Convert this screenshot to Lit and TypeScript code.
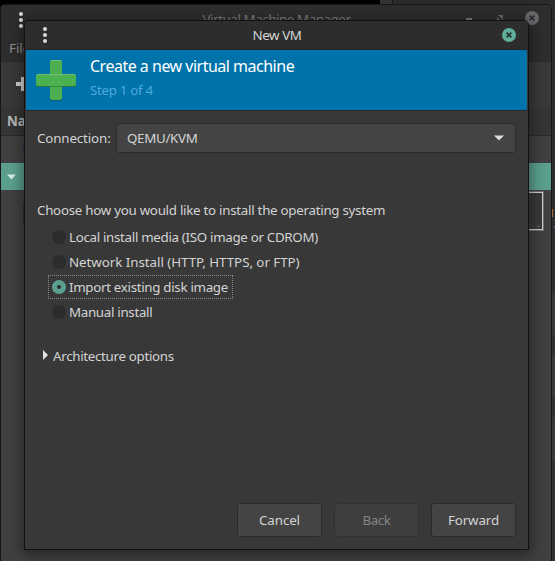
import { LitElement, html, css, svg } from "lit";
import { customElement, property, state } from "lit/decorators.js";
import { classMap } from "lit/directives/class-map.js";

const font = css`
  :host { font: 13.33px/18px "Noto Sans", sans-serif; color: #d3d3d3; box-sizing: border-box; }
  * { box-sizing: border-box; }
`;

const dots = html`<svg width="6" height="18" viewBox="0 0 6 18" fill="#dcd8d8">
  <circle cx="3" cy="3" r="2"/><circle cx="3" cy="9" r="2"/><circle cx="3" cy="15" r="2"/></svg>`;

const closeIcon = (fill: string, stroke: string) => html`<svg width="14" height="14" viewBox="0 0 14 14">
  ${svg`<circle cx="7" cy="7" r="7" fill=${fill}/><path d="M4.6 4.6L9.4 9.4M9.4 4.6L4.6 9.4" stroke=${stroke} stroke-width="1.7"/>`}</svg>`;

@customElement("manager-window")
class ManagerWindow extends LitElement {
  static styles = [font, css`
    :host { display: flex; flex-direction: column; height: 557px; width: 552px; border: 1px solid #161616; border-bottom: 0;
      border-radius: 5px 5px 0 0; background: #404040; overflow: hidden; }
    svg { display: block; flex: none; }
    .title { height: 29px; flex: none; background: #2d2d2d; display: flex; padding: 6px 12px 0 17px; color: #7b7b7b; }
    .title .name { flex: 1; text-align: center; line-height: 17px; padding-left: 64px; letter-spacing: -.42px; white-space: nowrap; }
    .controls { display: flex; gap: 18px; }
    .menu { height: 28px; flex: none; background: #2d2d2d; padding: 5px 8px; color: #8e8e8e; }
    .tools { height: 45px; flex: none; background: #393939; padding: 15px; }
    .head { height: 29px; flex: none; background: #353535; border-bottom: 1px solid #292929; font-weight: bold; padding: 5px 6px; color: #b8b8b8; }
    .conn { height: 27px; flex: none; padding: 9px 0 0 22px; }
    .edge { width: 1px; height: 8px; background: #2d3245; }
    .selected { height: 27px; flex: none; background: #5a9f8c; padding: 11px 6px; }
    .guest { height: 40px; flex: none; padding: 1px 8px 0 22px; display: flex; align-items: center; justify-content: space-between; }
    .screen { width: 1px; height: 18px; background: #2b2b2b; margin-top: 8px; }
    .graph { width: 20px; height: 38px; border: 1px solid #cfcbcb; outline: 1px solid rgba(200,196,196,.35); background: #393939; display: flex; align-items: flex-end; justify-content: flex-end; padding: 2px; }
    .trace { width: 3px; height: 1px; background: #557367; }
  `];
  render() {
    return html`
      <div class="title">${dots}<div class="name">Virtual Machine Manager</div>
        <div class="controls">
          <svg width="10" height="14" viewBox="0 0 10 14"><path d="M1 8H7" stroke="#777" stroke-width="2"/></svg>
          <svg width="14" height="14" viewBox="0 0 14 14" fill="#666"><path d="M5 4H10V9Z M4 6V10H8Z"/></svg>
          ${closeIcon("#67686b", "#2d2d2d")}
        </div></div>
      <div class="menu">File</div>
      <div class="tools"><svg width="14" height="14" viewBox="0 0 14 14"><path d="M7 0V14M0 7H14" stroke="#cfcfcf" stroke-width="4"/></svg></div>
      <div class="head">Name</div>
      <div class="conn"><div class="edge"></div></div>
      <div class="selected"><svg width="9" height="6" viewBox="0 0 9 6"><path d="M0 .5H9L4.5 5.5Z" fill="#dcebe6"/></svg></div>
      <div class="guest"><div class="screen"></div><div class="graph"><div class="trace"></div></div></div>`;
  }
}

@customElement("new-vm-dialog")
class NewVmDialog extends LitElement {
  @property() connection = "QEMU/KVM";
  @state() private chosen = 2;
  private choices: [string, string][] = [
    ["Local install media (ISO image or CDROM)", "tight"],
    ["Network Install (HTTP, HTTPS, or FTP)", "wide"],
    ["Import existing disk image", "tight"],
    ["Manual install", "tight"],
  ];
  static styles = [font, css`
    :host { display: flex; flex-direction: column; width: 505px; height: 530px; border: 1px solid #121212; border-radius: 5px 5px 0 0;
      background: #383838; box-shadow: 0 3px 14px 2px rgba(0,0,0,.42); overflow: hidden; }
    svg { display: block; flex: none; }
    .title { height: 29px; flex: none; background: #2d2d2d; border-bottom: 1px solid #252525; display: flex; padding: 5px 12px 0 17px; }
    .title .name { flex: 1; text-align: center; line-height: 18px; padding-left: 4px; letter-spacing: -.4px; }
    .close { padding-top: 2px; }
    .banner { height: 61px; flex: none; margin: 0 1px; background: #0073aa; border-bottom: 1px solid #292929; display: flex; gap: 14px; padding: 10px 10px 0; }
    .heading { font-size: 16px; line-height: 22px; color: #fff; margin-top: -5px; letter-spacing: -.5px; }
    .step { color: #4fa9dc; line-height: 18px; margin-top: 4px; letter-spacing: -.3px; }
    .connection { display: flex; align-items: center; margin: 12px 12px 0; height: 30px; }
    .caption { width: 79px; letter-spacing: -.13px; }
    .select { flex: 1; height: 30px; border: 1px solid #2b2b2b; border-radius: 3px; background: #444; display: flex; align-items: center; justify-content: space-between; padding: 0 11px 0 10px; letter-spacing: -.3px; }
    .prompt { margin: 48px 12px 0; height: 18px; letter-spacing: -.27px; }
    .choices { display: flex; flex-direction: column; align-items: flex-start; gap: 1px; margin: 6px 0 0 23px; }
    .choice { display: flex; align-items: center; gap: 3px; height: 24px; border: 1px dotted transparent; padding: 0 4px 0 3px; }
    .choice.on { border-color: #898989; }
    .tight { letter-spacing: -.31px; }
    .wide { letter-spacing: -.04px; }
    .radio { width: 14px; height: 14px; border-radius: 50%; background: #2c2c2e; display: flex; align-items: center; justify-content: center; }
    .on .radio { background: #5a9f8f; }
    .on .radio::after { content: ""; width: 4px; height: 4px; border-radius: 50%; background: #292d2d; }
    .options { display: flex; align-items: center; gap: 5px; margin: 23px 0 0 18px; height: 18px; letter-spacing: -.31px; }
    .options svg { margin-top: -2px; }
    .actions { margin: auto 12px 12px; display: flex; justify-content: flex-end; gap: 12px; }
    .button { width: 85px; height: 34px; border: 1px solid #2b2b2b; border-radius: 3px; background: #444; line-height: 33px; text-align: center; letter-spacing: -.1px; }
    .button.off { color: #858585; background: #3e3e3e; border-color: #323232; letter-spacing: -.4px; }
  `];
  render() {
    return html`
      <div class="title">${dots}<div class="name">New VM</div><div class="close">${closeIcon("#5fae9b", "#263431")}</div></div>
      <div class="banner">
        <svg width="40" height="41" viewBox="0 0 40 41">
          <rect x="14" y="1" width="12" height="40" rx="2" fill="#075a80"/><rect x="14" width="12" height="40" rx="2" fill="#4caf50"/>
          <rect y="15" width="40" height="12" rx="2" fill="#23704a"/>
          <rect x="14" y="26" width="12" height="1" fill="#3a873e"/>
          <rect y="14" width="40" height="12" rx="2" fill="#4caf50"/><path d="M1 14.5H39M15 .5H25" stroke="#70bf73"/>
        </svg>
        <div><div class="heading">Create a new virtual machine</div><div class="step">Step 1 of 4</div></div>
      </div>
      <div class="connection"><span class="caption">Connection:</span><div class="select"><span>${this.connection}</span>
        <svg width="10" height="6" viewBox="0 0 10 6"><path d="M0 .5H10L5 5.5Z" fill="#dedede"/></svg></div></div>
      <div class="prompt">Choose how you would like to install the operating system</div>
      <div class="choices">${this.choices.map(([label, tracking], i) => html`
        <div class=${classMap({ choice: true, on: i === this.chosen })} @click=${() => { this.chosen = i; }}>
          <span class="radio"></span><span class=${tracking}>${label}</span></div>`)}</div>
      <div class="options"><svg width="5" height="10" viewBox="0 0 5 10"><path d="M0 0V10L5 5Z" fill="#e2e2e2"/></svg><span>Architecture options</span></div>
      <div class="actions"><div class="button">Cancel</div><div class="button off">Back</div><div class="button">Forward</div></div>`;
  }
}

@customElement("app-root")
class AppRoot extends LitElement {
  static styles = css`
    :host { display: block; position: relative; width: 555px; height: 561px; background: #000; overflow: hidden; }
    .strip, .behind, manager-window, new-vm-dialog { position: absolute; }
    .strip { left: 380px; top: 0; width: 12px; height: 8px; background: #333; }
    .behind { left: 392px; top: 0; right: 0; bottom: 0; border-left: 1px solid #161616;
      background: linear-gradient(#2b2b2b 20px, #222 20px, #222 21px, #2e2e2e 21px, #2e2e2e 293px, #393939 293px, #393939 335px,
        #2f2f2f 335px, #2f2f2f 355px, #393939 355px, #393939 397px, #2f2f2f 397px, #2f2f2f 417px, #393939 417px, #393939 459px, #333 459px); }
    .mark { position: absolute; right: 2px; top: 209px; width: 1px; height: 8px; background: #a86c3d; }
    .mark.blue { right: 0; top: 226px; height: 2px; background: #326ba8; }
    manager-window { left: 0; top: 4px; }
    new-vm-dialog { left: 24px; top: 20px; }
  `;
  render() {
    return html`<div class="strip"></div><div class="behind"><div class="mark"></div><div class="mark blue"></div></div>
      <manager-window></manager-window><new-vm-dialog></new-vm-dialog>`;
  }
}
